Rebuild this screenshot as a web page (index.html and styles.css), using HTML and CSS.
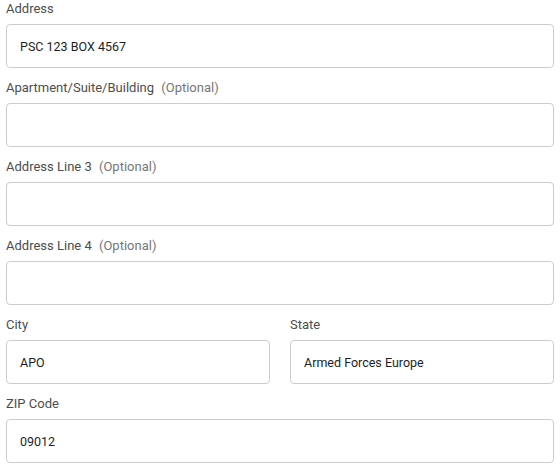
FILE: index.html
```html
<!DOCTYPE html>
<html lang="en">
<head>
    <meta charset="UTF-8">
    <meta name="viewport" content="width=device-width, initial-scale=1.0">
    <title>Address</title>
    <link rel="stylesheet" href="styles.css">
</head>
<body>
    <form class="address-form">
        <div class="field">
            <label for="address">Address</label>
            <input type="text" id="address" value="PSC 123 BOX 4567">
        </div>
        <div class="field">
            <label for="address2">Apartment/Suite/Building <span class="optional">(Optional)</span></label>
            <input type="text" id="address2">
        </div>
        <div class="field">
            <label for="address3">Address Line 3 <span class="optional">(Optional)</span></label>
            <input type="text" id="address3">
        </div>
        <div class="field">
            <label for="address4">Address Line 4 <span class="optional">(Optional)</span></label>
            <input type="text" id="address4">
        </div>
        <div class="field-row">
            <div class="field">
                <label for="city">City</label>
                <input type="text" id="city" value="APO">
            </div>
            <div class="field">
                <label for="state">State</label>
                <input type="text" id="state" value="Armed Forces Europe">
            </div>
        </div>
        <div class="field">
            <label for="zip">ZIP Code</label>
            <input type="text" id="zip" value="09012">
        </div>
    </form>
</body>
</html>
```

FILE: styles.css
```css
body {
    font-family: Roboto, 'Liberation Sans', sans-serif;
    margin: 0;
    padding: 0 6px;
    background-color: #fff;
    color: #222;
}
.address-form {
    display: flex;
    flex-direction: column;
    gap: 11px;
}
.field {
    display: flex;
    flex-direction: column;
}
.field label {
    font-size: 13px;
    line-height: 17px;
    color: #4d4d4d;
    margin-bottom: 7px;
}
.optional {
    color: #777;
    margin-left: 4px;
}
.field input {
    height: 44px;
    box-sizing: border-box;
    border: 1px solid #ccc;
    border-radius: 4px;
    padding: 0 13px;
    font-family: inherit;
    font-size: 12.5px;
    color: #1e1e1e;
    background-color: #fff;
    outline: none;
}
.field-row {
    display: grid;
    grid-template-columns: 1fr 1fr;
    gap: 20px;
}
```
